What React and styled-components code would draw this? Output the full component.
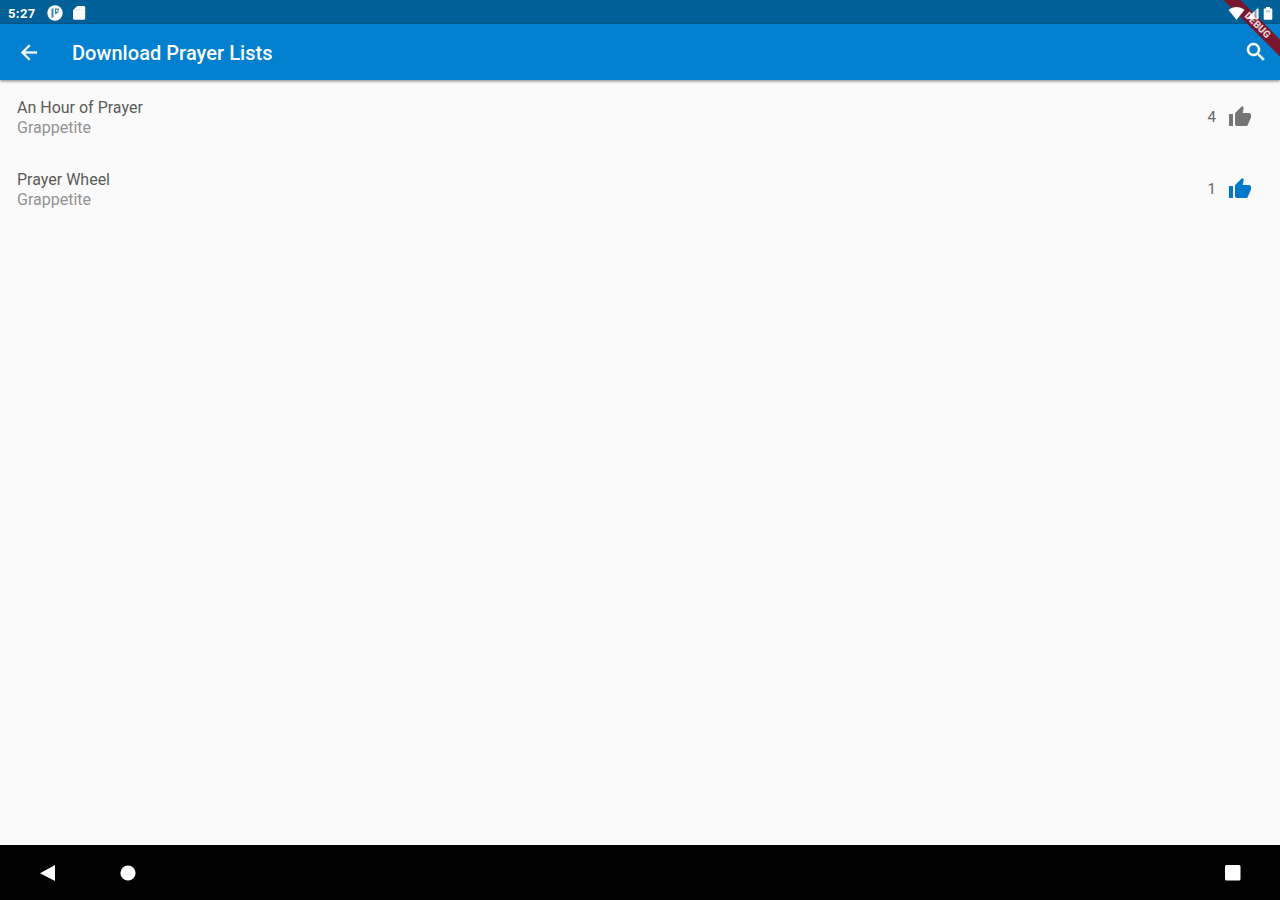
import React from 'react';
import styled, { createGlobalStyle } from 'styled-components';

const GlobalStyle = createGlobalStyle`
  * {
    box-sizing: border-box;
  }

  body {
    margin: 0;
    font-family: Roboto, sans-serif;
    background-color: #fafafa;
  }
`;

const Screen = styled.div`
  position: relative;
  display: flex;
  flex-direction: column;
  height: 900px;
  overflow: hidden;
`;

const StatusBar = styled.div`
  display: flex;
  align-items: center;
  justify-content: space-between;
  height: 24px;
  padding: 2px 6px 0 8px;
  background-color: #006097;
  color: #fff;
`;

/* system icons stay above the debug banner */
const StatusGroup = styled.div`
  position: relative;
  display: flex;
  align-items: center;
  z-index: 3;

  svg {
    display: block;
  }
`;

const Clock = styled.span`
  width: 39px;
  font-size: 13px;
  font-weight: 700;
  letter-spacing: 0.4px;
`;

const NotificationIcons = styled.div`
  display: flex;
  gap: 8px;
`;

const AppBar = styled.header`
  display: flex;
  align-items: center;
  height: 56px;
  padding: 0 12px 0 17px;
  background-color: #0080cf;
  color: #fff;
  box-shadow: 0 1px 3px rgba(0, 0, 0, 0.5);
  z-index: 1;
`;

const Title = styled.h1`
  flex: 1;
  margin: 2px 0 0 31px;
  font-size: 20px;
  font-weight: 500;
  letter-spacing: 0.05px;
`;

const List = styled.main`
  flex: 1;
  padding-top: 1px;
`;

const Row = styled.div`
  display: flex;
  align-items: center;
  justify-content: space-between;
  height: 72px;
  padding: 0 28px 0 17px;
`;

const Text = styled.div`
  padding-top: 1px;
  font-size: 16px;
  line-height: 20px;
`;

const Name = styled.div`
  color: #5a5a5a;
`;

const Author = styled.div`
  color: #929292;
`;

const Likes = styled.div`
  display: flex;
  align-items: center;
  gap: 12px;
  font-size: 15px;
  color: #666;
`;

const NavBar = styled.footer`
  display: flex;
  align-items: center;
  justify-content: space-between;
  height: 55px;
  padding: 0 39px 0 40px;
  background-color: #000;
  color: #fff;
`;

const NavGroup = styled.div`
  display: flex;
  gap: 64px;
`;

const DebugBanner = styled.div`
  position: absolute;
  top: 18px;
  right: -18px;
  width: 84px;
  height: 12px;
  padding-left: 4px;
  transform: rotate(45deg);
  background-color: #77162e;
  color: #e6cdd5;
  font-size: 10px;
  font-weight: 900;
  line-height: 12px;
  text-align: center;
  z-index: 2;
`;

const Icon = ({ size = 24, box = 24, color = 'currentColor', children }) => (
  <svg width={size} height={size} viewBox={`0 0 ${box} ${box}`} fill={color}>
    {children}
  </svg>
);

const lists = [
  { name: 'An Hour of Prayer', author: 'Grappetite', likes: 4, liked: false },
  { name: 'Prayer Wheel', author: 'Grappetite', likes: 1, liked: true },
];

const PrayerList = ({ list }) => (
  <Row>
    <Text>
      <Name>{list.name}</Name>
      <Author>{list.author}</Author>
    </Text>
    <Likes>
      {list.likes}
      <Icon color={list.liked ? '#0078cc' : '#757575'}>
        <path d="M1 21h4V9H1v12zm22-11c0-1.1-.9-2-2-2h-6.31l.95-4.57.03-.32c0-.41-.17-.79-.44-1.06L14.17 1 7.59 7.59C7.22 7.95 7 8.45 7 9v10c0 1.1.9 2 2 2h9c.83 0 1.54-.5 1.84-1.22l3.02-7.05c.09-.23.14-.47.14-.73v-2z" />
      </Icon>
    </Likes>
  </Row>
);

const App = () => {
  return (
    <Screen>
      <GlobalStyle />
      <StatusBar>
        <StatusGroup>
          <Clock>5:27</Clock>
          <NotificationIcons>
            <Icon size={16} box={16}>
              <circle cx="8" cy="8" r="7.7" />
              <path d="M4.5 3.5h2v9h-2zM8 3.5h4l-.7 4.3L8 9.5z" fill="#3f86af" />
              <path d="M9.2 4.8h1.400v2H9.200z" />
            </Icon>
            <Icon size={16} box={16}>
              <path d="M6.200 1h6.600c.8 0 1.400.6 1.400 1.400v10.900c0 .8-.6 1.400-1.400 1.400H3.400c-.8 0-1.400-.6-1.400-1.400V5.200z" />
              <path d="M5.600 4h1v1.500h-1zM8 4h1v1.500H8zM10.400 4h1v1.500h-1z" fill="#c9dde9" />
            </Icon>
          </NotificationIcons>
        </StatusGroup>
        <StatusGroup>
          <Icon size={17} box={17}>
            <path d="M8.500 14.800.5 5C2.800 3.100 5.500 2 8.500 2s5.700 1.100 8 3z" />
          </Icon>
          <Icon size={16} box={16}>
            <path d="M13.500 2v12H1.500z" opacity=".45" />
            <path d="M9.500 6v8h-8zM11.500 4h2v10h-2z" opacity=".9" />
          </Icon>
          <Icon size={13} box={13}>
            <path d="M5 0h4v1.500h1.300c.6 0 1 .4 1 1v9.300c0 .6-.4 1-1 1H3.700c-.6 0-1-.4-1-1V2.500c0-.6.4-1 1-1H5z" />
            <path d="M5 3.500h4v2H5z" fill="#b5d0e1" />
          </Icon>
        </StatusGroup>
      </StatusBar>
      <AppBar>
        <Icon>
          <path d="M20 11.500H7.830l5.590-5.590L12 4.500l-8 8 8 8 1.410-1.410L7.830 13.500H20v-2z" stroke="currentColor" strokeWidth=".3" />
        </Icon>
        <Title>Download Prayer Lists</Title>
        <Icon>
          <path
            d="M15.500 14h-.79l-.28-.27C15.410 12.590 16 11.110 16 9.500 16 5.910 13.090 3 9.500 3S3 5.910 3 9.500 5.910 16 9.500 16c1.610 0 3.090-.59 4.230-1.570l.27.28v.79l5 4.990L20.490 19l-4.990-5zm-6 0C7.010 14 5 11.990 5 9.500S7.010 5 9.500 5 14 7.010 14 9.500 11.990 14 9.500 14z"
            stroke="currentColor"
            strokeWidth=".5"
          />
        </Icon>
      </AppBar>
      <List>
        {lists.map((list) => (
          <PrayerList key={list.name} list={list} />
        ))}
      </List>
      <NavBar>
        <NavGroup>
          <Icon size={16} box={16}>
            <path d="M15 0v16L0 8.300z" />
          </Icon>
          <Icon size={16} box={16}>
            <circle cx="8" cy="8" r="7.600" />
          </Icon>
        </NavGroup>
        <Icon size={16} box={16}>
          <rect x="0" y="0" width="15.500" height="15.500" rx="1.500" />
        </Icon>
      </NavBar>
      <DebugBanner>DEBUG</DebugBanner>
    </Screen>
  );
};

export default App;
